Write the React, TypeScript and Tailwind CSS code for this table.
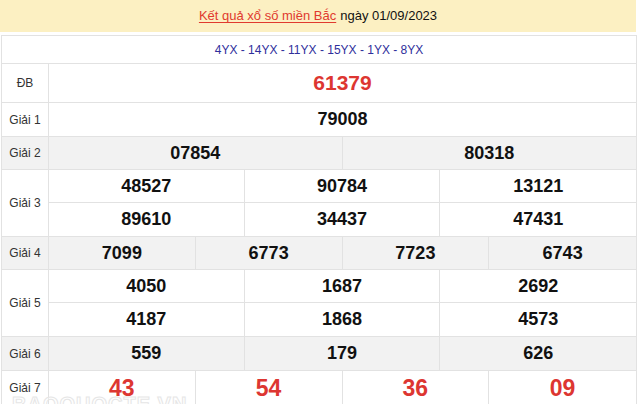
const rows: { label: string; nums: string[][]; gray?: boolean; red?: boolean; h: number[] }[] = [
  { label: "Giải 1", nums: [["79008"]], h: [33] },
  { label: "Giải 2", nums: [["07854", "80318"]], gray: true, h: [32] },
  { label: "Giải 3", nums: [["48527", "90784", "13121"], ["89610", "34437", "47431"]], h: [33, 33] },
  { label: "Giải 4", nums: [["7099", "6773", "7723", "6743"]], gray: true, h: [32] },
  { label: "Giải 5", nums: [["4050", "1687", "2692"], ["4187", "1868", "4573"]], h: [33, 33] },
  { label: "Giải 6", nums: [["559", "179", "626"]], gray: true, h: [33] },
  { label: "Giải 7", nums: [["43", "54", "36", "09"]], red: true, h: [34] },
];

const cols: Record<number, string> = {
  1: "grid-cols-1",
  2: "grid-cols-2",
  3: "grid-cols-3",
  4: "grid-cols-4",
};

export default function App() {
  return (
    <div className="relative w-[641px] h-[404px] overflow-hidden bg-white font-['Liberation_Sans',Arial,sans-serif]">
      {/* title band */}
      <div className="w-[636px] h-[32px] bg-[#fcf0c2] flex items-center justify-center text-[13px] text-[#111]">
        <a className="text-[#e03a2e] underline underline-offset-2">Kết quả xổ số miền Bắc</a>
        <span className="ml-[4px]">ngày 01/09/2023</span>
      </div>

      <div className="mt-[3px] ml-px w-[636px] border border-[#e2e2e2] border-b-0">
        <div className="h-[28px] border-b border-[#e2e2e2] flex items-center justify-center text-[12px] text-[#2f2f9c]">
          4YX - 14YX - 11YX - 15YX - 1YX - 8YX
        </div>

        {/* special prize */}
        <div className="flex h-[39px] border-b border-[#e2e2e2]">
          <div className="w-[47px] shrink-0 border-r border-[#e2e2e2] flex items-center justify-center text-[12px] text-[#333]">
            ĐB
          </div>
          <div className="flex-1 flex items-center justify-center text-[21px] font-bold text-[#dd3631]">61379</div>
        </div>

        {rows.map((r) => (
          <div key={r.label} className={`flex border-b border-[#e2e2e2] ${r.gray ? "bg-[#f2f2f2]" : "bg-white"}`}>
            <div className="w-[47px] shrink-0 border-r border-[#e2e2e2] flex items-center justify-center text-[12px] text-[#333]">
              {r.label}
            </div>
            <div className="flex-1 flex flex-col">
              {r.nums.map((line, i) => (
                <div
                  key={i}
                  style={{ height: r.h[i] }}
                  className={`grid ${cols[line.length]} divide-x divide-[#e2e2e2] ${i < r.nums.length - 1 ? "border-b border-[#e2e2e2]" : ""}`}
                >
                  {line.map((n) => (
                    <div
                      key={n}
                      className={`flex items-center justify-center font-bold ${r.red ? "text-[23px] text-[#dd3631]" : "text-[18px] text-[#111]"}`}
                    >
                      {n}
                    </div>
                  ))}
                </div>
              ))}
            </div>
          </div>
        ))}
      </div>

      {/* watermark */}
      <div className="absolute left-[12px] top-[389px] text-[20px] font-bold tracking-[1px] text-white/40 [-webkit-text-stroke:1px_#e6e6e6] pointer-events-none">
        BAOQUOCTE.VN
      </div>
    </div>
  );
}
